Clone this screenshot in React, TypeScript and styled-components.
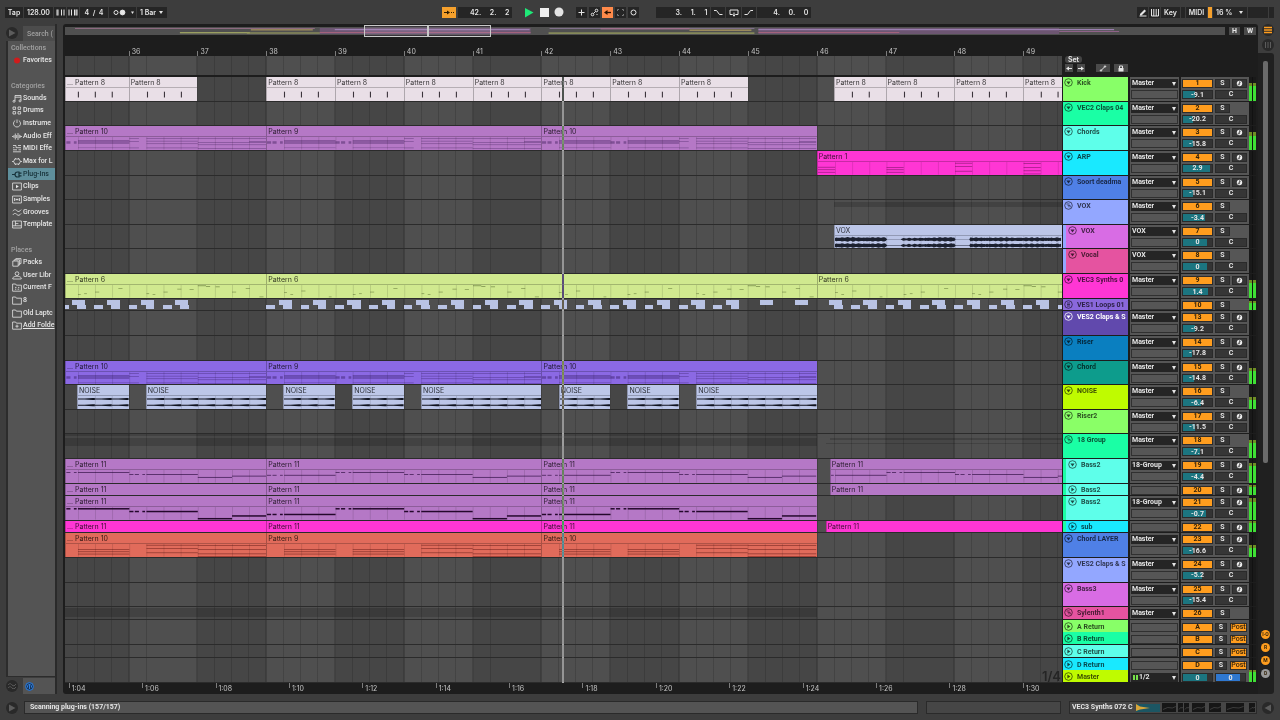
import React from "react";
import styled, { createGlobalStyle, css } from "styled-components";

const VIEW_START = 35.075;
const VIEW_BARS = 14.49;
const VIEW_END = VIEW_START + VIEW_BARS;
const PLAYHEAD = 42.3;
const pct = (bar: number) => `${((bar - VIEW_START) / VIEW_BARS) * 100}%`;
const span = (from: number, to: number) => ({
  left: pct(from),
  width: `${((to - from) / VIEW_BARS) * 100}%`,
});

const ui = '"Roboto", "Liberation Sans", sans-serif';
const wide = '"Inter", "Liberation Sans", sans-serif';

const c = {
  shell: "#3d3d3d",
  ink: "#1d1d1d",
  field: "#252525",
  panel: "#545454",
  cell: "#565656",
  text: "#e6e6e6",
  dim: "#a2a2a2",
  orange: "#ff9d1e",
  teal: "#1c7580",
};

const Global = createGlobalStyle`
  *, *::before, *::after { box-sizing: border-box; }
  html, body, #root { height: 100%; margin: 0; }
  body { background: ${c.shell}; color: ${c.text}; font: 500 7px/9px ${ui}; overflow: hidden; }
  button, input, select { font: inherit; color: inherit; margin: 0; padding: 0; border: 0; border-radius: 0; outline: 0; min-width: 0; }
  button { cursor: default; }
  ul { list-style: none; margin: 0; padding: 0; }
  svg { display: block; flex: none; }
`;

const Shell = styled.div`
  display: flex;
  flex-direction: column;
  height: 100vh;
  min-height: 700px;
  overflow: hidden;
`;

/* ---------- Transport ---------- */

const Transport = styled.header`
  display: grid;
  grid-template-columns: minmax(0, 437fr) auto minmax(0, 462fr);
  align-items: center;
  flex: none;
  height: 24px;
  padding: 0 6px 0 5px;
  font-family: ${wide};
  font-weight: 600;
`;

const Cluster = styled.div<{ $gap?: number; $end?: boolean }>`
  display: flex;
  align-items: center;
  gap: ${(p) => p.$gap ?? 1}px;
  justify-content: ${(p) => (p.$end ? "flex-end" : "flex-start")};
`;

const boxLook = css<{ $w: number; $tone?: string }>`
  display: flex;
  align-items: center;
  justify-content: center;
  flex: none;
  width: ${(p) => p.$w}px;
  height: 11px;
  line-height: 11px;
  background: ${(p) => p.$tone ?? c.field};
`;
const BarButton = styled.button<{ $w: number; $tone?: string }>`
  ${boxLook}
`;
const BarBlank = styled.span<{ $w: number; $tone?: string }>`
  ${boxLook}
`;
const BarField = styled.input<{ $w: number; $tone?: string }>`
  ${boxLook}
  text-align: center;
`;
const Position = styled.input<{ $w: number; $tone?: string }>`
  ${boxLook}
  padding-right: 3px;
  text-align: right;
  white-space: pre;
`;
const DropWrap = styled.span<{ $w: number }>`
  position: relative;
  flex: none;
  width: ${(p) => p.$w}px;
  height: 11px;
  background: ${c.field};
  &::after {
    content: "";
    position: absolute;
    right: 4px;
    top: 4px;
    border: 2px solid transparent;
    border-top: 3px solid ${c.text};
    border-bottom: 0;
    pointer-events: none;
  }
`;
const Drop = styled.select`
  appearance: none;
  display: block;
  width: 100%;
  height: 11px;
  padding-left: 3px;
  line-height: 11px;
  background: transparent;
`;

/* ---------- Main split ---------- */

const Main = styled.main`
  display: flex;
  flex: 1;
  min-height: 0;
`;

const Sidebar = styled.aside`
  display: flex;
  flex-direction: column;
  flex: none;
  width: 57px;
  border-right: 2px solid #2a2a2a;
`;
const SideRow = styled.div`
  display: flex;
  align-items: flex-end;
  flex: none;
  gap: 5px;
  height: 17px;
  padding-left: 6px;
`;
const RoundButton = styled.button<{ $lit?: boolean; $tight?: boolean }>`
  display: flex;
  align-items: center;
  justify-content: center;
  flex: none;
  align-self: center;
  width: 12px;
  height: 12px;
  margin-left: ${(p) => (p.$tight ? -3 : 0)}px;
  border-radius: 6px;
  background: #292929;
  color: ${(p) => (p.$lit ? c.orange : "#5c5c5c")};
`;
const Search = styled.input`
  width: 32px;
  height: 15px;
  padding-left: 4px;
  background: #4c4c4c;
  &::placeholder { color: #a0a0a0; opacity: 1; }
`;
const Browser = styled.nav`
  flex: 1;
  min-height: 0;
  margin-left: 6px;
  padding-top: 1px;
  border: solid #2c2c2c;
  border-width: 0 0 1px 2px;
  background: ${c.panel};
  overflow: hidden;
`;
const SideTitle = styled.h2<{ $spaced?: boolean }>`
  margin: ${(p) => (p.$spaced ? 13 : 0)}px 0 0;
  padding-left: 3px;
  font: 500 7px/12px ${ui};
  color: ${c.dim};
`;
const SideList = styled.ul<{ $h: number }>`
  display: flex;
  flex-direction: column;
  height: ${(p) => p.$h}px;
`;
const SideItem = styled.li<{ $on?: boolean }>`
  flex: 1;
  background: ${(p) => (p.$on ? "#5f8f9c" : "transparent")};
  color: ${(p) => (p.$on ? "#17323a" : c.text)};
`;
const SideLink = styled.a<{ $line?: boolean }>`
  display: flex;
  align-items: center;
  gap: 1px;
  height: 100%;
  padding-left: 4px;
  color: inherit;
  white-space: nowrap;
  text-decoration: ${(p) => (p.$line ? "underline" : "none")};
`;
const SideFoot = styled.div`
  display: flex;
  align-items: center;
  width: 32px;
  height: 16px;
  padding-left: 2px;
  background: ${c.panel};
`;

/* ---------- Arrangement ---------- */

const Arrangement = styled.section`
  display: flex;
  flex-direction: column;
  flex: 1;
  min-width: 0;
  margin-left: 6px;
  padding: 3px 2px 0;
  border-radius: 3px 3px 0 3px;
  background: ${c.ink};
`;
const OverviewRow = styled.div`
  display: flex;
  flex: none;
  gap: 4px;
  height: 9px;
`;
const Overview = styled.div`
  position: relative;
  flex: 1;
  height: 8px;
  background: #505050;
  svg { width: 100%; height: 100%; }
`;
const ViewFrame = styled.div`
  position: absolute;
  top: -2px;
  bottom: -2px;
  border: 1px solid #c9c9c9;
  background: rgba(190, 160, 200, 0.18);
`;
const MiniButton = styled.button<{ $w: number }>`
  display: flex;
  align-items: center;
  justify-content: center;
  width: ${(p) => p.$w}px;
  height: 8px;
  background: #4a4a4a;
  font: 700 7px/8px ${ui};
`;
const Ruler = styled.div<{ $h: number; $side: number }>`
  position: relative;
  flex: none;
  height: ${(p) => p.$h}px;
  margin-right: ${(p) => p.$side}px;
  overflow: hidden;
  font: 400 7px/9px ${wide};
  color: #c6c6c6;
`;
const Mark = styled.span<{ $low?: boolean }>`
  position: absolute;
  height: 11px;
  padding-left: 3px;
  bottom: ${(p) => (p.$low ? "auto" : "0")};
  top: ${(p) => (p.$low ? "0" : "auto")};
  &::before {
    content: "";
    position: absolute;
    left: 0;
    bottom: ${(p) => (p.$low ? "auto" : "0")};
    top: ${(p) => (p.$low ? "0" : "auto")};
    width: 1px;
    height: 5px;
    background: #7c7c7c;
  }
`;
const MarkText = styled.span<{ $low?: boolean }>`
  display: block;
  padding-top: 1px;
  line-height: ${(p) => (p.$low ? 10 : 12)}px;
`;
const ScrubRow = styled.div`
  display: grid;
  grid-template-columns: minmax(0, 1fr) 193px;
  column-gap: 1px;
  flex: none;
  height: 21px;
  padding-bottom: 5px;
`;
const Scrub = styled.div`
  position: relative;
  overflow: hidden;
`;
const Locators = styled.div`
  display: flex;
  flex-direction: column;
  gap: 1px;
  padding-left: 2px;
`;
const SetButton = styled.button`
  width: 17px;
  height: 7px;
  border-radius: 3px;
  background: #444;
  font: 600 7px/7px ${wide};
`;
const LocatorRow = styled.div`
  display: flex;
  gap: 4px;
`;

const Tracks = styled.div`
  position: relative;
  display: grid;
  flex: 1;
  min-height: 0;
`;
const GridLayer = styled.div`
  position: absolute;
  inset: 0;
  overflow: hidden;
  background: #464646;
`;
const LaneArea = styled.div`
  position: absolute;
  inset: 0 194px 0 0;
`;
const BarShade = styled.div<{ $light: boolean }>`
  position: absolute;
  top: 0;
  bottom: 0;
  border-left: 1px solid #404040;
  background:
    repeating-linear-gradient(90deg, transparent 0 24%, rgba(0, 0, 0, 0.15) 24% 25%),
    ${(p) => (p.$light ? "#4f4f4f" : "#464646")};
`;
const Playhead = styled.div`
  position: absolute;
  top: 0;
  bottom: 0;
  width: 2px;
  background: #bcbcbc;
  mix-blend-mode: exclusion;
`;
const GridValue = styled.span`
  position: absolute;
  right: 1px;
  bottom: 0;
  font: 600 13px/13px ${wide};
  color: #252525;
`;

const Row = styled.div`
  position: relative;
  display: grid;
  grid-template-columns: minmax(0, 1fr) 193px;
  column-gap: 1px;
  min-height: 0;
  overflow: hidden;
`;
const Lane = styled.div`
  position: relative;
  overflow: hidden;
  border-bottom: 1px solid #2b2b2b;
`;
const Clip = styled.div<{ $color: string }>`
  position: absolute;
  top: 0;
  bottom: 0;
  display: flex;
  flex-direction: column;
  border-left: 1px solid rgba(0, 0, 0, 0.25);
  background: ${(p) => p.$color};
  overflow: hidden;
`;
const ClipName = styled.div<{ $single?: boolean }>`
  flex: none;
  height: 11px;
  padding-left: 1px;
  border-bottom: ${(p) => (p.$single ? "0" : "1px solid rgba(0, 0, 0, 0.22)")};
  font: 400 7px/${(p) => (p.$single ? 12 : 11)}px ${wide};
  color: rgba(0, 0, 0, 0.78);
  white-space: nowrap;
`;
const ClipBody = styled.svg`
  flex: 1;
  width: 100%;
  min-height: 0;
`;
const Loop = styled.div<{ $low: boolean }>`
  position: absolute;
  top: ${(p) => (p.$low ? 6 : 1)}px;
  height: ${(p) => (p.$low ? 4 : 5)}px;
  background: #b9c3e4;
`;
const GroupBand = styled.div<{ $y: number; $h: number }>`
  position: absolute;
  top: ${(p) => p.$y}px;
  height: ${(p) => p.$h}px;
  background: rgba(0, 0, 0, 0.16);
`;

const Head = styled.div`
  display: grid;
  grid-template-columns: 65px 49px 75px;
  column-gap: 2px;
  background: ${c.ink};
  padding-bottom: 1px;
`;
const Name = styled.div<{ $color: string; $parent?: string; $light?: boolean; $low?: boolean }>`
  display: flex;
  gap: 4px;
  min-width: 0;
  padding: ${(p) => (p.$low ? 2 : 1)}px 0 0 ${(p) => (p.$parent ? 2 : 1)}px;
  border-left: ${(p) => (p.$parent ? `3px solid ${p.$parent}` : "0")};
  background: ${(p) => p.$color};
  color: ${(p) => (p.$light ? "#fff" : "rgba(0, 0, 0, 0.7)")};
  font-weight: 700;
  line-height: 10px;
  white-space: nowrap;
  overflow: hidden;
`;
const Stack = styled.div<{ $low?: boolean }>`
  display: flex;
  flex-direction: column;
  gap: 2px;
  padding: ${(p) => (p.$low ? 3 : 2)}px 1px 0;
  background: ${c.cell};
  font-weight: 700;
  overflow: hidden;
`;
const SelectWrap = styled.span`
  position: relative;
  display: block;
  flex: none;
  height: 9px;
  background: ${c.field};
  &::after {
    content: "";
    position: absolute;
    right: 2px;
    top: 3px;
    border: 2px solid transparent;
    border-top: 4px solid ${c.text};
    border-bottom: 0;
    pointer-events: none;
  }
`;
const Route = styled.select<{ $inset?: boolean }>`
  appearance: none;
  display: block;
  width: 100%;
  height: 9px;
  padding-left: ${(p) => (p.$inset ? 8 : 1)}px;
  line-height: 9px;
  background: transparent;
`;
const MeterGlyph = styled.span`
  position: absolute;
  left: 2px;
  top: 2px;
  width: 5px;
  height: 5px;
  border: solid #76e04a;
  border-width: 0 2px;
`;
const EmptySlot = styled.span`
  flex: none;
  height: 9px;
  border: 1px solid #303030;
`;
const Mixer = styled.div`
  display: grid;
  grid-template-columns: 65px 7px;
  justify-content: space-between;
  padding-left: 1px;
  background: ${c.cell};
  font-weight: 700;
  overflow: hidden;
`;
const Controls = styled.div<{ $low?: boolean }>`
  display: flex;
  flex-direction: column;
  gap: 2px;
  padding-top: ${(p) => (p.$low ? 3 : 2)}px;
`;
const ControlLine = styled.div`
  display: flex;
  flex: none;
  gap: 2px;
  height: 9px;
`;
const Activator = styled.button`
  width: 31px;
  height: 9px;
  border: 1px solid #2d2d2d;
  background: ${c.orange};
  color: #33220a;
  line-height: 7px;
`;
const Square = styled.button<{ $w?: number }>`
  display: flex;
  align-items: center;
  justify-content: center;
  width: ${(p) => p.$w ?? 15}px;
  height: 9px;
  border: 1px solid #2a2a2a;
  background: #363636;
  line-height: 7px;
`;
const Post = styled.button`
  width: 17px;
  height: 9px;
  margin-left: 1px;
  border: 1px solid #2d2d2d;
  background: ${c.orange};
  color: #33220a;
  font-weight: 500;
  line-height: 7px;
`;
const Amount = styled.input<{ $fill: number; $tone?: string }>`
  flex: none;
  width: 31px;
  height: 9px;
  border: 1px solid #2a2a2a;
  background: linear-gradient(90deg, ${(p) => p.$tone ?? c.teal} ${(p) => p.$fill}%, #343434 ${(p) => p.$fill}%);
  line-height: 7px;
  text-align: center;
`;
const Meter = styled.div<{ $level: number }>`
  background:
    linear-gradient(90deg, transparent 3px, #111 3px 4px, transparent 4px),
    linear-gradient(0deg,
      #3fe035 ${(p) => Math.max(0, p.$level - 14)}%,
      #6f8f24 ${(p) => Math.max(0, p.$level - 14)}% ${(p) => p.$level}%,
      #191919 ${(p) => p.$level}%);
`;

/* ---------- Right rail ---------- */

const Rail = styled.aside`
  display: flex;
  flex-direction: column;
  flex: none;
  width: 22px;
  padding-right: 6px;
`;
const RailTop = styled.div`
  display: flex;
  flex-direction: column;
  align-items: center;
  gap: 3px;
  flex: none;
  height: 29px;
  padding-left: 4px;
`;
const RailBody = styled.div`
  display: flex;
  flex-direction: column;
  flex: 1;
  min-height: 0;
  padding: 8px 4px 16px 3px;
  border-radius: 0 3px 3px 0;
  background: #202020;
`;
const Thumb = styled.div`
  flex: 402;
  width: 5px;
  margin-left: 2px;
  border-radius: 2px;
  background: #6a6a6a;
`;
const RailSpace = styled.div`
  flex: 167;
`;
const Toggles = styled.div`
  display: flex;
  flex-direction: column;
  gap: 4px;
`;
const Toggle = styled.button<{ $on: boolean }>`
  width: 9px;
  height: 9px;
  border-radius: 5px;
  background: ${(p) => (p.$on ? c.orange : "#9a9a9a")};
  color: #35250a;
  font: 700 5px/9px ${ui};
`;

/* ---------- Status ---------- */

const Status = styled.footer`
  display: flex;
  align-items: center;
  flex: none;
  gap: 8px;
  height: 26px;
  padding: 1px 6px 0 6px;
  font-weight: 700;
`;
const StatusBox = styled.div<{ $grow?: boolean; $w?: number }>`
  display: flex;
  align-items: center;
  justify-content: space-between;
  flex: ${(p) => (p.$grow ? "1" : "none")};
  width: ${(p) => (p.$w ? `${p.$w}px` : "auto")};
  height: 13px;
  margin-left: ${(p) => (p.$grow ? -2 : 0)}px;
  padding: 0 0 0 ${(p) => (p.$grow ? 5 : 2)}px;
  border: 1px solid #2a2a2a;
  background: ${(p) => (p.$grow ? c.panel : "#464646")};
  white-space: nowrap;
`;

/* ---------- Glyphs ---------- */

const glyphs: Record<string, React.ReactNode> = {
  dot: <circle cx="5" cy="4.5" r="3" fill="#d01c1c" stroke="none" />,
  note: <path d="M3 7.5V1.5H9V7M3 3.2H9M3 7.3a1 1 0 1 1-1-1h1M9 6.9a1 1 0 1 1-1-1h1" />,
  drums: <path d="M1 1h2.6v2.4H1zM6 1h2.6v2.4H6zM1 5.6h2.6V8H1zM6 5.6h2.6V8H6z" />,
  dial: <path d="M3.2 1.5a3.5 3.5 0 1 0 3.6 0M5 .5V4" />,
  wave: <path d="M0 4.5h1.5M2 3v3M3.3 1.5v6M4.7 3v3M6 1v7M7.3 2.7v3.5M8.5 3.5v2M9 4.5h1" />,
  midi: <path d="M1 1.5h3M6 1.5h3M1 3.7h1.5M4 3.7h5M1 5.8h4M6.5 5.8H9M1 7.8h8M4 1.5v2.2" />,
  max: <path d="M0 4.5h1.6M8.4 4.5H10M2.8 2L1.6 4.5 2.8 7H7.2L8.4 4.5 7.2 2zM3.4 1v1M6.6 1v1M3.4 7v1M6.6 7v1" />,
  plug: <path d="M0 4.5h3M3 4.5A2.6 2.6 0 0 1 5.6 2H7v5H5.6A2.6 2.6 0 0 1 3 4.5M7 3.2h2.5M7 5.8h2.5" strokeWidth="1.2" />,
  clip: <><path d="M.6 1h8.8v7H.6z" /><path d="M4 2.8v3.4l2.8-1.7z" fill="currentColor" stroke="none" /></>,
  sample: <path d="M.6 1h8.8v7H.6zM2.5 3v3M4 4.5h2M4 3.5v2M6 3.5v2M7.5 3v3" />,
  groove: <path d="M.8 3.2C2.4 1 3.6 1.4 5 2.8S7.6 3.6 9.2 1.6M.8 7C2.4 4.8 3.6 5.2 5 6.6S7.6 7.4 9.2 5.4" />,
  template: <path d="M.6 1h8.8v7H.6zM.6 5.8h8.8M3.4 1v4.8M3.4 3.6h3" />,
  packs: <path d="M.8 3h5.4v5.2H.8zM2.2 3V1.8h5.4V7H6.2M3.8 1.8V.6H9v5H7.6" />,
  user: <path d="M5 .8a1.8 1.8 0 1 1 0 3.7A1.8 1.8 0 0 1 5 .8M.8 8V6.8C2 5.6 3.4 5.2 5 5.2s3 .4 4.2 1.6V8z" />,
  project: <path d="M.6 8.2V1h3l.8 1.2h5v6zM3 4.4h1.5M6 4.4h1.3M3 6.2h1.3M5.6 6.2h1.6" />,
  folder: <path d="M.6 8.2V1h3l.8 1.2h5v6z" />,
  add: <path d="M.6 8.2V1h3l.8 1.2h5v6zM5 3.6v3.2M3.4 5.2h3.2" />,
};
const SideGlyph = ({ name }: { name: string }) => (
  <svg width="10" height="9" viewBox="0 0 10 9" fill="none" stroke="currentColor" strokeWidth="0.8">
    {glyphs[name]}
  </svg>
);

const FoldGlyph = ({ kind }: { kind: "open" | "shut" | "group" | "bars" }) => (
  <svg width="9" height="9" viewBox="0 0 9 9" fill="none" stroke="currentColor" strokeWidth="0.8">
    <circle cx="4.5" cy="4.5" r="3.8" />
    {kind === "open" && <path d="M2.4 3.4h4.2L4.5 6.4z" fill="currentColor" stroke="none" />}
    {kind === "shut" && <path d="M3.4 2.4v4.2L6.4 4.5z" fill="currentColor" stroke="none" />}
    {kind === "group" && <path d="M2.4 3h3.2M3.6 4.6h2.6v1.8M4.4 5.8h.8" />}
    {kind === "bars" && <path d="M3 3h3M3 4.5h3M3 6h3" />}
  </svg>
);

const Pic = ({ w = 10, children }: { w?: number; children: React.ReactNode }) => (
  <svg width={w} height="9" viewBox={`0 0 ${w} 9`} fill="none" stroke={c.text} strokeWidth="1">
    {children}
  </svg>
);

/* ---------- Clip contents ---------- */

type Body = "kick" | "chord" | "orange" | "bass" | "bassWide" | "arp" | "vox" | "synth" | "noise";
type Note = [number, number, number, number];

const lines = (from: number, to: number, ys: number[], h = 0.7): Note[] => ys.map((y) => [from, to, y, h]);
const dashes = (y: number, h = 1): Note[] => [
  [0, 0.06, y, h],
  [0.08, 0.14, y, h],
  [0.19, 0.23, y, h],
];

const phaseNotes: Record<string, Note[][]> = {
  chord: [
    [...dashes(4, 2.4), ...lines(0.25, 1, [3, 4.2, 5.4], 1), ...lines(0.25, 1, [10], 0.5)],
    [...dashes(4, 2.4), ...lines(0.25, 1, [3, 4.2, 5.4], 1), ...lines(0.25, 1, [10], 0.5)],
    [...lines(0, 0.14, [1, 4, 10]), ...lines(0.25, 1, [1, 3.6, 6, 10])],
    [...lines(0, 1, [1, 5, 7, 10.6]), ...lines(0.75, 1, [4], 0.8)],
  ],
  orange: [
    lines(0.25, 1, [5, 7, 9.2]),
    lines(0.25, 1, [5, 7, 9.2]),
    lines(0.25, 1, [0.8, 4, 8]),
    lines(0, 1, [1, 5, 9, 11.4]),
  ],
  bass: [
    [...dashes(4.6, 0.8), ...lines(0.25, 1, [4.6], 0.8)],
    [...dashes(2, 0.8), ...lines(0.25, 1, [2], 0.8)],
    [...dashes(3.8, 0.8), ...lines(0.25, 1, [3.8], 0.8)],
    [[0, 0.5, 6.6, 0.8], [0.5, 1, 5.4, 0.8]],
  ],
  bassWide: [
    [...dashes(6.4, 1.4), ...lines(0.25, 1, [6.4], 1.4)],
    [...dashes(1, 1.4), ...lines(0.25, 1, [1], 1.4)],
    [...dashes(3.6, 1.4), ...lines(0.25, 1, [3.6], 1.4)],
    [[0, 0.5, 10.4, 1.4], [0.5, 1, 7.8, 1.4]],
  ],
  arp: [
    lines(0, 0.25, [4.6, 7, 9.4]),
    lines(0, 0.25, [5, 7, 9.4]),
    lines(0, 0.25, [0.8, 4, 8.4]),
    lines(0, 0.25, [1, 5, 8, 11]),
  ],
  synth: [
    [[0.25, 0.29, 7, 0.6], [0.34, 0.38, 8.6, 0.6], [0.5, 0.56, 5.4, 0.6], [0.9, 0.94, 11, 0.6]],
    [[0.25, 0.29, 8.6, 0.6], [0.34, 0.38, 8, 0.6], [0.5, 0.56, 6.4, 0.6], [0.84, 0.9, 3, 0.6]],
    [[0.25, 0.29, 8, 0.6], [0.34, 0.38, 8.6, 0.6], [0.5, 0.56, 6.4, 0.6], [0.7, 0.76, 3.6, 0.6], [0.88, 0.94, 4, 0.6]],
    [[0, 0.12, 0.4, 0.7], [0.12, 0.18, 1, 0.7], [0.26, 0.32, 1.4, 0.7], [0.5, 0.56, 6.4, 0.6], [0.7, 0.76, 3, 0.6], [0.9, 0.96, 11, 0.6]],
  ],
};

const noteInk: Partial<Record<Body, string>> = {
  chord: "rgba(25,0,60,0.34)",
  orange: "rgba(60,0,0,0.5)",
  bass: "rgba(30,0,50,0.7)",
  bassWide: "#24082c",
  arp: "rgba(60,0,50,0.5)",
  synth: "rgba(30,50,0,0.5)",
};

const envelope = (from: number, to: number, mid: number) => {
  const top: string[] = [];
  const bottom: string[] = [];
  for (let i = 0; ; i++) {
    const b = from + i * 0.02;
    if (b > to) break;
    const f = b % 1;
    const quiet = (b > 47 && b < 47.23) || (b > 48 && b < 48.23);
    const swell = b < 47 ? 1.4 : b < 48 ? 0.6 + 1.2 * (f - 0.2) : 1.2;
    const a = quiet ? 0.15 : swell + 0.8 * Math.abs(Math.sin(i * 2.3) * Math.cos(i * 0.7));
    top.push(`${b * 100},${mid - a}`);
    bottom.unshift(`${b * 100},${mid + a}`);
  }
  return [...top, ...bottom].join(" ");
};

const Contents = ({ kind, from, to }: { kind: Body; from: number; to: number }) => {
  const items: React.ReactNode[] = [];
  const rect = (x0: number, x1: number, y: number, h: number, fill: string, key: string) => {
    const a = Math.max(x0, from);
    const b = Math.min(x1, to);
    if (b > a) items.push(<rect key={key} x={a * 100} width={(b - a) * 100} y={y} height={h} fill={fill} />);
  };
  for (let q = Math.ceil(from * 4 + 0.01); q / 4 < to; q++) {
    const x = q / 4;
    if (kind === "kick") {
      if (q % 4) rect(x, x + 0.016, 3.5, 5.5, "#3a333a", `k${q}`);
    } else rect(x, x + 0.012, 0, 12, "rgba(0,0,0,0.14)", `q${q}`);
  }
  const table = phaseNotes[kind];
  if (table)
    for (let bar = Math.floor(from); bar < to; bar++)
      table[(bar + 2) % 4].forEach((n, i) =>
        rect(bar + n[0], bar + n[1], n[2], n[3], noteInk[kind] as string, `n${bar}-${i}`)
      );
  if (kind === "noise")
    for (let q = Math.round(from * 4); q / 4 < to; q++)
      [2.8, 8.8].forEach((y) =>
        items.push(
          <path
            key={`w${q}-${y}`}
            d={`M${q * 25} ${y - 0.5}L${q * 25 + 10} ${y - 0.5}L${q * 25 + 22} ${y - 0.9}H${q * 25 + 25}V${y + 0.9}H${q * 25 + 22}L${q * 25 + 10} ${y + 0.5}H${q * 25}Z`}
            fill="#10131f"
          />
        )
      );
  if (kind === "vox")
    [3.2, 9].forEach((y) => items.push(<polygon key={y} points={envelope(from, to, y)} fill="#1c2130" />));
  return (
    <ClipBody viewBox={`${from * 100} 0 ${(to - from) * 100} 12`} preserveAspectRatio="none">
      {items}
    </ClipBody>
  );
};

/* ---------- Data ---------- */

type ClipData = [number, number, string];
interface Track {
  name: string;
  color: string;
  id: string;
  single?: boolean;
  low?: boolean;
  fold?: "open" | "shut" | "group" | "bars";
  parent?: string;
  light?: boolean;
  route?: string;
  volume?: string;
  fill?: number;
  arm?: boolean;
  post?: boolean;
  level?: number;
  clipColor?: string;
  body?: Body;
  clips?: ClipData[];
}

const S = VIEW_START;
const E = VIEW_END;
const violet = "#b578c6";
const sky = "#bcc6e8";
const cycle = (a: string, b: string, d: string): ClipData[] => [
  [S, 38, `... ${a}`],
  [38, 42, b],
  [42, 46, d],
];
const p11 = cycle("Pattern 11", "Pattern 11", "Pattern 11");
const p10 = cycle("Pattern 10", "Pattern 9", "Pattern 10");

const tracks: Track[] = [
  {
    name: "Kick", color: "#88ff68", id: "1", route: "Master", volume: "-9.1", fill: 42, arm: true, level: 76,
    clipColor: "#e9dfe7", body: "kick",
    clips: [
      [S, 36, "... Pattern 8"], [36, 37, "Pattern 8"],
      ...[38, 39, 40, 41, 42, 43, 44].map((b): ClipData => [b, b + 1, "Pattern 8"]),
      [46.25, 47, "Pattern 8"], [47, 48, "Pattern 8"], [48, 49, "Pattern 8"], [49, E, "Pattern 8"],
    ],
  },
  { name: "VEC2 Claps 04", color: "#1affa5", id: "2", route: "Master", volume: "-20.2", fill: 34 },
  { name: "Chords", color: "#5effea", id: "3", route: "Master", volume: "-15.8", fill: 36, arm: true, level: 74, clipColor: violet, body: "chord", clips: p10 },
  { name: "ARP", color: "#19e9ff", id: "4", route: "Master", volume: "2.9", fill: 92, arm: true, clipColor: "#ff36d4", body: "arp", clips: [[46, E, "Pattern 1"]] },
  { name: "Soort deadma", color: "#4f80e6", id: "5", route: "Master", volume: "-15.1", fill: 36, arm: true },
  { name: "VOX", color: "#93a7ff", id: "6", fold: "group", route: "Master", volume: "-3.4", fill: 76 },
  { name: "VOX", color: "#d86ce4", id: "7", parent: "#93a7ff", route: "VOX", volume: "0", fill: 82, clipColor: sky, body: "vox", clips: [[46.25, E, "VOX"]] },
  { name: "Vocal", color: "#e553a0", id: "8", parent: "#93a7ff", route: "VOX", volume: "0", fill: 82 },
  {
    name: "VEC3 Synths 0", color: "#ff36d4", id: "9", route: "Master", volume: "1.4", fill: 87, arm: true, level: 76,
    clipColor: "#d0e98f", body: "synth", clips: [[S, 38, "... Pattern 6"], [38, 46, "Pattern 6"], [46, E, "Pattern 6"]],
  },
  { name: "VES1 Loops 01", color: "#8a68dc", id: "10", single: true, fold: "bars", level: 80 },
  { name: "VES2 Claps & S", color: "#6149ad", id: "13", light: true, route: "Master", volume: "-9.2", fill: 42, arm: true },
  { name: "Riser", color: "#0a7fc0", id: "14", route: "Master", volume: "-17.8", fill: 30, arm: true },
  { name: "Chord", color: "#0d9c8c", id: "15", route: "Master", volume: "-14.8", fill: 37, arm: true, level: 70, clipColor: "#8b69e4", body: "chord", clips: p10 },
  {
    name: "NOISE", color: "#bffb00", id: "16", route: "Master", volume: "-6.4", fill: 62, level: 50, clipColor: sky, body: "noise",
    clips: ([[35.25, 36], [36.25, 38], [38.25, 39], [39.25, 40], [40.25, 42], [42.25, 43], [43.25, 44], [44.25, 46]] as [number, number][])
      .map(([a, b]): ClipData => [a, b, "NOISE"]),
  },
  { name: "Riser2", color: "#8aff67", id: "17", route: "Master", volume: "-11.5", fill: 42, arm: true },
  { name: "18 Group", color: "#1affa5", id: "18", fold: "group", route: "Master", volume: "-7.1", fill: 58, level: 76 },
  { name: "Bass2", color: "#5effea", id: "19", parent: "#1affa5", route: "18-Group", volume: "-4.4", fill: 68, arm: true, level: 84, clipColor: violet, body: "bass", clips: [...p11, [46.19, E, "Pattern 11"]] },
  { name: "Bass2", color: "#5effea", id: "20", single: true, fold: "shut", parent: "#1affa5", arm: true, level: 90, clipColor: violet, clips: [...p11, [46.19, E, "Pattern 11"]] },
  { name: "Bass2", color: "#5effea", id: "21", parent: "#1affa5", route: "18-Group", volume: "-0.7", fill: 80, arm: true, level: 90, clipColor: violet, body: "bassWide", clips: p11 },
  { name: "sub", color: "#19e9ff", id: "22", single: true, fold: "shut", parent: "#1affa5", arm: true, level: 96, clipColor: "#ff36d4", clips: [...p11, [46.13, E, "Pattern 11"]] },
  { name: "Chord LAYER", color: "#4f80e6", id: "23", route: "Master", volume: "-16.6", fill: 33, arm: true, level: 52, clipColor: "#e16b5b", body: "orange", clips: p10 },
  { name: "VES2 Claps & S", color: "#93a7ff", id: "24", route: "Master", volume: "-5.2", fill: 66, arm: true },
  { name: "Bass3", color: "#d86ce4", id: "25", route: "Master", volume: "-15.4", fill: 36, arm: true },
  { name: "Sylenth1", color: "#e553a0", id: "26", single: true, fold: "group", route: "Master" },
  { name: "A Return", color: "#88ff68", id: "A", single: true, low: true, fold: "shut", post: true },
  { name: "B Return", color: "#1affa5", id: "B", single: true, low: true, fold: "shut", post: true },
  { name: "C Return", color: "#5effea", id: "C", single: true, low: true, fold: "shut", post: true },
  { name: "D Return", color: "#19e9ff", id: "D", single: true, low: true, fold: "shut", post: true },
  { name: "Master", color: "#bffb00", id: "M", single: true, low: true, fold: "shut", level: 96 },
];
const rowTemplate = tracks
  .map((t) => `minmax(0, ${t.low ? 76 : t.single ? 75 : 148}fr)`)
  .join(" ");

const loops: { from: number; to: number; low: boolean }[] = [{ from: S, to: 35.13, low: true }];
for (let q = 35 * 4 + 1; q / 4 < E; q++) {
  const b = q / 4;
  const silent = (b >= 37 && b < 38) || (b >= 45 && b <= 46);
  if (!silent) loops.push({ from: b, to: b + 0.125, low: true });
}
for (let h = 35 * 2; h / 2 < E; h++) {
  const b = h / 2 + 0.18;
  if (b >= 37 && b < 38) continue;
  loops.push({ from: b, to: b + 0.19, low: false });
}

const bars = Array.from({ length: 15 }, (_, i) => 35 + i);
const times = Array.from({ length: 14 }, (_, i) => ({ label: `1:${String(4 + i * 2).padStart(2, "0")}`, bar: 35.129 + i * 1.0667 }));

/* ---------- Pieces ---------- */

const Bars = () => (
  <GridLayer>
    {bars.map((b) => (
      <BarShade key={b} $light={b % 2 === 0} style={span(b, b + 1)} />
    ))}
  </GridLayer>
);

const ArmGlyph = () => (
  <svg width="7" height="7" viewBox="0 0 7 7">
    <circle cx="3.5" cy="3.5" r="2.7" fill="#eee" />
    <path d="M3.6 1.6v2.6M3.6 1.6l1 .8M3.6 4.3a.7.7 0 1 1-.8-.6" stroke="#222" strokeWidth=".7" fill="none" />
  </svg>
);

const TrackRow = ({ t }: { t: Track }) => {
  const master = t.id === "M";
  return (
    <Row>
      <Lane>
        {t.clips?.map(([from, to, label]) => (
          <Clip key={from} $color={t.clipColor as string} style={span(from, to)}>
            <ClipName $single={t.single}>{label}</ClipName>
            {t.body && <Contents kind={t.body} from={from} to={to} />}
          </Clip>
        ))}
        {t.id === "10" && loops.map((l, i) => <Loop key={i} $low={l.low} style={span(l.from, l.to)} />)}
        {t.id === "6" && <GroupBand $y={2} $h={5} style={span(46.25, E)} />}
        {t.id === "18" && (
          <>
            <GroupBand $y={0} $h={2} style={span(S, 46)} />
            <GroupBand $y={4} $h={8} style={span(S, 46)} />
            <GroupBand $y={4} $h={2} style={span(46.19, E)} />
            <GroupBand $y={9} $h={1} style={span(46.13, E)} />
          </>
        )}
        {t.id === "26" && <GroupBand $y={1} $h={9} style={span(S, 46)} />}
      </Lane>
      <Head>
        <Name $color={t.color} $parent={t.parent} $light={t.light} $low={t.low}>
          <FoldGlyph kind={t.fold ?? "open"} />
          {t.name}
        </Name>
        <Stack $low={t.low}>
          {t.route || master ? (
            <SelectWrap>
              {master && <MeterGlyph />}
              <Route aria-label={`${t.name} ${t.id} output`} $inset={master}>
                <option>{master ? "1/2" : t.route}</option>
              </Route>
            </SelectWrap>
          ) : (
            <EmptySlot />
          )}
          {!t.single && <EmptySlot />}
        </Stack>
        <Mixer>
          <Controls $low={t.low}>
            {master ? (
              <ControlLine>
                <Amount aria-label="Master volume" defaultValue="0" $fill={84} />
                <Amount aria-label="Cue volume" defaultValue="0" $fill={84} $tone="#2f78d0" />
              </ControlLine>
            ) : (
              <ControlLine>
                <Activator>{t.id}</Activator>
                <Square $w={t.post ? 12 : 15}>S</Square>
                {t.arm && (
                  <Square aria-label={`Arm ${t.id}`}>
                    <ArmGlyph />
                  </Square>
                )}
                {t.post && <Post>Post</Post>}
              </ControlLine>
            )}
            {t.volume && (
              <ControlLine>
                <Amount aria-label={`Volume ${t.id}`} defaultValue={t.volume} $fill={t.fill as number} />
                <Square $w={32}>C</Square>
              </ControlLine>
            )}
          </Controls>
          <Meter $level={t.level ?? 0} />
        </Mixer>
      </Head>
    </Row>
  );
};

const categories: [string, string][] = [
  ["note", "Sounds"], ["drums", "Drums"], ["dial", "Instrume"], ["wave", "Audio Eff"], ["midi", "MIDI Effe"], ["max", "Max for L"],
  ["plug", "Plug-Ins"], ["clip", "Clips"], ["sample", "Samples"], ["groove", "Grooves"], ["template", "Template"],
];
const places: [string, string][] = [
  ["packs", "Packs"], ["user", "User Libr"], ["project", "Current F"], ["folder", "8"], ["folder", "Old Laptc"], ["add", "Add Folde"],
];

const Items = ({ data, height }: { data: [string, string][]; height: number }) => (
  <SideList $h={height}>
    {data.map(([icon, label]) => (
      <SideItem key={label} $on={label === "Plug-Ins"}>
        <SideLink href="#" $line={icon === "add"}>
          <SideGlyph name={icon} />
          {label}
        </SideLink>
      </SideItem>
    ))}
  </SideList>
);

const overviewBars: [number, number, number, number, string][] = [
  [10, 250, 1, 1, "#8d6a80"], [115, 185, 5, 1.4, "#9a9f62"], [186, 248, 2, 1.6, "#92825a"], [182, 290, 5.4, 1.2, "#96985e"],
  [255, 466, 1, 6, "#6d5672"], [255, 466, 5, 1, "#a3627c"], [270, 465, 2, 1.2, "#9a7fb0"],
  [485, 690, 1, 1, "#80708a"], [484, 690, 5.4, 1.4, "#93985e"], [536, 625, 1, 1.4, "#a0708e"], [625, 687, 2.4, 1.6, "#9a8a5c"],
  [694, 995, 1, 6, "#6d5672"], [694, 835, 5, 1, "#a3627c"], [694, 1050, 2, 1.2, "#9a7fb0"], [995, 1055, 4, 1, "#8f6288"],
];

export default function App() {
  return (
    <Shell>
      <Global />
      <Transport>
        <Cluster>
          <BarButton $w={18}>Tap</BarButton>
          <BarField $w={29} aria-label="Tempo" defaultValue="128.00" />
          <BarButton $w={12} aria-label="Nudge down">
            <Pic><path d="M2 1.5v6M3 1.5v6M6.5 1.5v6M9 1.5v6" /></Pic>
          </BarButton>
          <BarButton $w={12} aria-label="Nudge up">
            <Pic><path d="M1 1.5v6M3.5 1.5v6M6.5 1.5v6M8 1.5v6M9 1.5v6" /></Pic>
          </BarButton>
          <BarField $w={28} aria-label="Time signature" defaultValue="4  /  4" />
          <BarButton $w={27} aria-label="Metronome">
            <Pic w={22}>
              <circle cx="4" cy="4.5" r="2" />
              <circle cx="10.5" cy="4.5" r="2.4" fill={c.text} />
              <path d="M19 3.5h3l-1.500 2.500z" fill={c.text} stroke="none" />
            </Pic>
          </BarButton>
          <DropWrap $w={30}>
            <Drop aria-label="Quantization"><option>1 Bar</option></Drop>
          </DropWrap>
        </Cluster>
        <Cluster $gap={0}>
          <Cluster $gap={2}>
            <BarButton $w={14} $tone="#f5a02c" aria-label="Follow">
              <Pic w={12}><path d="M1 4.500h5M8 4.500h1M10 4.500h1" stroke="#2a1a00" /><path d="M4 2.500v4l3-2z" fill="#2a1a00" stroke="none" /></Pic>
            </BarButton>
            <Position $w={54} aria-label="Song position" defaultValue="42.     2.     2" />
          </Cluster>
          <BarBlank $w={9} $tone="transparent" />
          <BarButton $w={16} $tone="transparent" aria-label="Play">
            <svg width="10" height="11" viewBox="0 0 10 11"><path d="M1 1v9.500L9.500 5.500z" fill="#1fe978" /></svg>
          </BarButton>
          <BarButton $w={14} $tone="transparent" aria-label="Stop">
            <svg width="9" height="9"><rect width="9" height="9" fill="#efefef" /></svg>
          </BarButton>
          <BarButton $w={16} $tone="transparent" aria-label="Record">
            <svg width="10" height="10"><circle cx="5" cy="5" r="4.500" fill="#e3e3e3" /></svg>
          </BarButton>
          <BarBlank $w={9} $tone="transparent" />
          <Cluster $gap={2}>
            <BarButton $w={11} aria-label="Overdub"><Pic w={9}><path d="M4.500 1.500v6M1.500 4.500h6" /></Pic></BarButton>
            <BarButton $w={11} aria-label="Automation arm"><Pic w={9}><circle cx="2.500" cy="6.500" r="1.300" /><circle cx="6.500" cy="2.500" r="1.300" /><path d="M3.500 5.500l2-2M6.500 6.500h1" /></Pic></BarButton>
            <BarButton $w={11} $tone="#ff8a4a" aria-label="Re-enable automation"><Pic w={9}><path d="M3 4.500h5" stroke="#2a1200" strokeWidth="1.300" /><path d="M4.500 2v5L1 4.500z" fill="#2a1200" stroke="none" /></Pic></BarButton>
            <BarButton $w={11} aria-label="Capture"><Pic w={9}><path d="M1.500 3V1.500H3M6 1.500h1.500V3M7.500 6v1.500H6M3 7.500H1.500V6" stroke="#7b7b7b" /></Pic></BarButton>
            <BarButton $w={11} aria-label="Session record"><Pic w={9}><circle cx="4.500" cy="4.500" r="2.500" /></Pic></BarButton>
          </Cluster>
          <BarBlank $w={17} $tone="transparent" />
          <Cluster>
            <Position $w={54} aria-label="Loop start" defaultValue="3.     1.     1" />
            <BarButton $w={14} aria-label="Punch in"><Pic><path d="M1 2.500h2.500l3 4H9.500" /></Pic></BarButton>
            <BarButton $w={15} aria-label="Loop"><Pic><path d="M3.500 6.500H1V2h8v4.500H6.500M5 4.500v4M3.800 6.500L5 8l1.200-1.500" /></Pic></BarButton>
            <BarButton $w={14} aria-label="Punch out"><Pic><path d="M.5 6.500H3.500l3-4H9" /></Pic></BarButton>
            <Position $w={54} aria-label="Loop length" defaultValue="4.     0.     0" />
          </Cluster>
        </Cluster>
        <Cluster $end>
          <BarButton $w={11} aria-label="Draw mode"><Pic><path d="M2 6l4.500-4.500 1.500 1.500L3.500 7.500H2z" fill={c.text} stroke="none" /><path d="M1.500 8h7" /></Pic></BarButton>
          <BarButton $w={11} aria-label="Computer keyboard"><Pic><path d="M1.500 1v7h7V1M3.800 1v7M6.200 1v7" /></Pic></BarButton>
          <BarButton $w={19}>Key</BarButton>
          <BarBlank $w={4} />
          <BarButton $w={21}>MIDI</BarButton>
          <BarBlank $w={4} $tone="#f5a02c" />
          <DropWrap $w={34}>
            <Drop aria-label="CPU load"><option>16 %</option></Drop>
          </DropWrap>
          <BarBlank $w={20} />
          <BarBlank $w={5} />
        </Cluster>
      </Transport>

      <Main>
        <Sidebar>
          <SideRow>
            <RoundButton aria-label="Toggle browser">
              <svg width="8" height="8"><path d="M1 .5v7L7.500 4z" fill="currentColor" /></svg>
            </RoundButton>
            <Search aria-label="Search" placeholder="Search (" />
          </SideRow>
          <Browser>
            <SideTitle>Collections</SideTitle>
            <Items data={[["dot", "Favorites"]]} height={13} />
            <SideTitle $spaced>Categories</SideTitle>
            <Items data={categories} height={139} />
            <SideTitle $spaced>Places</SideTitle>
            <Items data={places} height={76} />
          </Browser>
          <SideRow>
            <RoundButton aria-label="Groove pool">
              <svg width="8" height="6" fill="none" stroke="currentColor"><path d="M0 2c2-2 2.500-1.500 4 0s2.500 1 4-1M0 5c2-2 2.500-1.500 4 0s2.500 1 4-1" /></svg>
            </RoundButton>
            <SideFoot>
              <svg width="9" height="9" viewBox="0 0 9 9" fill="none" stroke="#2f7fe0" strokeWidth="1">
                <circle cx="4.500" cy="4.500" r="3.900" fill="#17365c" />
                <path d="M4.500 2v5M3 3.500L4.500 2 6 3.500M2.500 5.500v-2M6.500 5.500v-2" />
              </svg>
            </SideFoot>
          </SideRow>
        </Sidebar>

        <Arrangement>
          <OverviewRow>
            <Overview>
              <svg viewBox="0 0 1161 8" preserveAspectRatio="none">
                {overviewBars.map(([a, b, y, h, fill], i) => (
                  <rect key={i} x={a} width={b - a} y={y} height={h} fill={fill} />
                ))}
              </svg>
              <ViewFrame style={{ left: "25.8%", width: "10.9%" }} />
              <ViewFrame style={{ left: "31.2%", width: "1px" }} />
            </Overview>
            <MiniButton $w={11}>H</MiniButton>
            <MiniButton $w={12}>W</MiniButton>
          </OverviewRow>
          <Ruler $h={20} $side={194}>
            {bars.slice(1).map((b) => (
              <Mark key={b} style={{ left: pct(b) }}>
                <MarkText>{b}</MarkText>
              </Mark>
            ))}
          </Ruler>
          <ScrubRow>
            <Scrub><Bars /></Scrub>
            <Locators>
              <SetButton>Set</SetButton>
              <LocatorRow>
                <MiniButton $w={8} aria-label="Previous locator"><Pic w={8}><path d="M3 4.500h4" /><path d="M4 2.500v4L1 4.500z" fill={c.text} stroke="none" /></Pic></MiniButton>
                <MiniButton $w={8} aria-label="Next locator"><Pic w={8}><path d="M1 4.500h4" /><path d="M4 2.500v4l3-2z" fill={c.text} stroke="none" /></Pic></MiniButton>
                <BarBlank $w={3} $tone="transparent" />
                <MiniButton $w={14} aria-label="Automation mode"><Pic w={8}><path d="M2 6.500l4-4" /><circle cx="2" cy="6.500" r=".7" /><circle cx="6" cy="2.500" r=".7" /></Pic></MiniButton>
                <MiniButton $w={14} aria-label="Lock envelopes"><Pic w={8}><path d="M2.500 4V2h3v2" /><path d="M1.500 4h5v3.500h-5z" fill={c.text} stroke="none" /></Pic></MiniButton>
              </LocatorRow>
            </Locators>
          </ScrubRow>
          <Tracks style={{ gridTemplateRows: rowTemplate }}>
            <LaneArea><Bars /></LaneArea>
            {tracks.map((t) => <TrackRow key={t.id} t={t} />)}
            <LaneArea>
              <Playhead style={{ left: pct(PLAYHEAD) }} />
              <GridValue>1/4</GridValue>
            </LaneArea>
          </Tracks>
          <Ruler $h={11} $side={194}>
            {times.map((t) => (
              <Mark key={t.label} $low style={{ left: pct(t.bar) }}>
                <MarkText $low>{t.label}</MarkText>
              </Mark>
            ))}
          </Ruler>
        </Arrangement>

        <Rail>
          <RailTop>
            <RoundButton $lit aria-label="Arrangement view">
              <svg width="8" height="8" stroke="currentColor" strokeWidth="1.500"><path d="M0 1.500h8M0 4h8M0 6.500h8" /></svg>
            </RoundButton>
            <RoundButton aria-label="Session view">
              <svg width="8" height="8" stroke="currentColor"><path d="M1.500 1v6M4 1v6M6.500 1v6" /></svg>
            </RoundButton>
          </RailTop>
          <RailBody>
            <Thumb />
            <RailSpace />
            <Toggles>
              <Toggle $on>I·O</Toggle>
              <Toggle $on>R</Toggle>
              <Toggle $on>M</Toggle>
              <Toggle $on={false}>D</Toggle>
            </Toggles>
          </RailBody>
        </Rail>
      </Main>

      <Status>
        <RoundButton aria-label="Toggle info">
          <svg width="8" height="8"><path d="M1 .5v7L7.500 4z" fill="currentColor" /></svg>
        </RoundButton>
        <StatusBox $grow>Scanning plug-ins (157/157)</StatusBox>
        <StatusBox $w={135} />
        <StatusBox $w={188}>
          VEC3 Synths 072 C
          <svg width="120" height="10" viewBox="0 0 120 10">
            <rect x="0" y="1" width="24" height="8" fill="#1c5663" />
            <path d="M0 1l4 2.500 10 1.500-10 1.500L0 8z" fill="#d8a63a" />
            {[[26, 14], [42, 5], [48, 5], [56, 13], [73, 12], [90, 18], [113, 6]].map(([x, w]) => (
              <g key={x}>
                <rect x={x} y="0" width={w} height="9" fill="#161616" />
                <path d={`M${x + 1} 6.500l${w / 3}-2 ${w / 3} .5 ${w / 4}-1.500`} stroke="#555" strokeWidth=".6" fill="none" />
              </g>
            ))}
          </svg>
        </StatusBox>
        <RoundButton $tight aria-label="Toggle device view">
          <svg width="8" height="8"><path d="M7 .5v7L.5 4z" fill="currentColor" /></svg>
        </RoundButton>
      </Status>
    </Shell>
  );
}
